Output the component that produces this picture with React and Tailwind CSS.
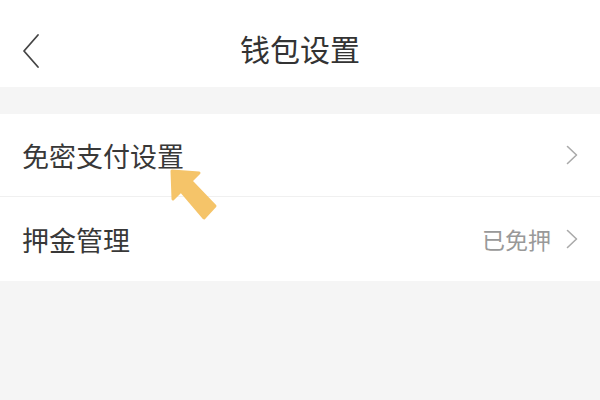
export default function App() {
  const font = { fontFamily: '"Noto Sans CJK SC", "Noto Sans", sans-serif' };
  return (
    <div className="relative w-[600px] h-[400px] bg-[#f5f5f5] overflow-hidden" style={font}>
      <div className="h-[87px] bg-white flex items-center pt-[17px]">
        <div className="w-[80px] flex items-center pl-[22px]">
          <svg width="20" height="36" viewBox="0 0 20 36" className="-mt-[3px]">
            <polyline points="16,2 2,18 16,34" fill="none" stroke="#444" strokeWidth="1.8" strokeLinecap="round" strokeLinejoin="round" />
          </svg>
        </div>
        <div className="flex-1 text-center text-[30px] leading-none text-[#333] -mt-[8px]">钱包设置</div>
        <div className="w-[80px]" />
      </div>
      <div className="mt-[27px] bg-white">
        <div className="h-[83px] flex items-center justify-between pl-[22px] pr-[22px] border-b border-[#f0f0f0]">
          <span className="text-[27px] leading-none text-[#383838]">免密支付设置</span>
          <svg width="12" height="20" viewBox="0 0 12 20">
            <polyline points="1.5,1.5 10.5,10 1.5,18.5" fill="none" stroke="#aaa" strokeWidth="1.6" strokeLinecap="round" strokeLinejoin="round" />
          </svg>
        </div>
        <div className="h-[84px] flex items-center justify-between pl-[22px] pr-[22px]">
          <span className="text-[27px] leading-none text-[#383838]">押金管理</span>
          <div className="flex items-center gap-[15px]">
            <span className="text-[23px] leading-none text-[#999]">已免押</span>
            <svg width="12" height="20" viewBox="0 0 12 20">
              <polyline points="1.5,1.5 10.5,10 1.5,18.5" fill="none" stroke="#aaa" strokeWidth="1.6" strokeLinecap="round" strokeLinejoin="round" />
            </svg>
          </div>
        </div>
      </div>
      <svg className="absolute left-0 top-0" width="600" height="400" viewBox="0 0 600 400">
        <polygon points="172,171 199,173 191,181 215,206 204,218 181,191 173,199" fill="#f5c469" stroke="#f5c469" strokeWidth="3" strokeLinejoin="round" />
      </svg>
    </div>
  );
}
